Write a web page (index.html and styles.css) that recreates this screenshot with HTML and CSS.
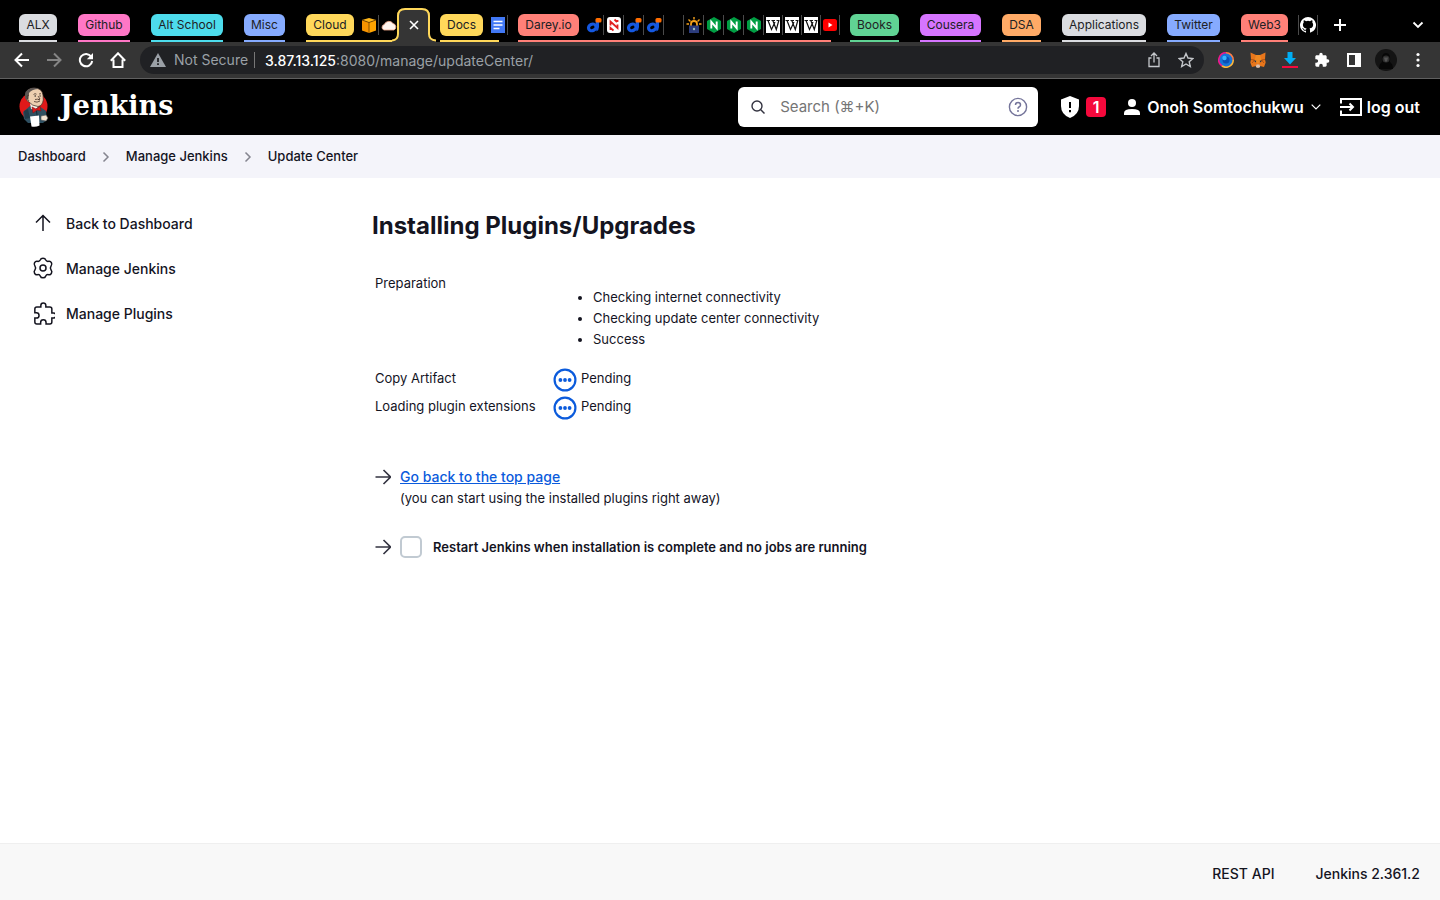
FILE: index.html
```html
<!DOCTYPE html>
<html lang="en">
<head>
<meta charset="utf-8">
<title>Update Center [Jenkins]</title>
<link rel="stylesheet" href="styles.css">
</head>
<body>
<svg class="defs" aria-hidden="true">
  <symbol id="i-darey" viewBox="0 0 16 16"><path d="M9.500 3.500h3.500V10q0 3-2.500 4.500z" fill="#1558e0"/><ellipse cx="6.300" cy="10.400" rx="3.900" ry="3.200" fill="#000" stroke="#1558e0" stroke-width="3.200" transform="rotate(-25 6.300 10.400)"/><rect x="9.500" y="1" width="6" height="4.500" rx="1.500" fill="#ff6d00"/></symbol>
  <symbol id="i-nginx" viewBox="0 0 16 16"><path d="M8 0l7 4v8l-7 4-7-4V4z" fill="#009e43"/><path d="M5.300 11.500V4.800l5.400 6.400V4.500" fill="none" stroke="#fff" stroke-width="1.900"/></symbol>
  <symbol id="i-wiki" viewBox="0 0 14 16"><path d="M0 0h14v16H0z" fill="#fff"/><path d="M.5 3.500h3.500M5.500 3.500h3.500M10.500 3.500h3M2 3.500l3.500 9L9 5M6.800 3.500l3.500 9 2.500-9" fill="none" stroke="#111" stroke-width="1.200"/></symbol>
  <symbol id="i-arrow" viewBox="0 0 16 16"><path d="M.5 8h15M8.500 1l7 7-7 7" fill="none" stroke="currentColor" stroke-width="1.600"/></symbol>
  <symbol id="i-pending" viewBox="0 0 24 24"><circle cx="12" cy="12" r="10.400" fill="#fff" stroke="#0b5bdc" stroke-width="2.200"/><g fill="#0b5bdc"><circle cx="7.400" cy="12" r="1.900"/><circle cx="12" cy="12" r="1.900"/><circle cx="16.600" cy="12" r="1.900"/></g></symbol>
  <symbol id="i-crumb" viewBox="0 0 8 12"><path d="M1.500 1.500L6 6l-4.500 4.500" fill="none" stroke="#85858f" stroke-width="1.500"/></symbol>
  <symbol id="i-puzzle" viewBox="0 0 24 24"><path d="M20.500 11H19V7c0-1.100-.9-2-2-2h-4V3.500a2.500 2.500 0 0 0-5 0V5H4c-1.100 0-2 .9-2 2v3.800h1.500a2.700 2.700 0 0 1 0 5.400H2V20c0 1.100.9 2 2 2h3.800v-1.500a2.700 2.700 0 0 1 5.400 0V22H17c1.100 0 2-.9 2-2v-4h1.500a2.500 2.500 0 0 0 0-5z"/></symbol>
</svg>

<div class="tabs">
  <div class="group grey w-alx"><button class="chip">ALX</button></div>
  <div class="group pink w-github"><button class="chip">Github</button></div>
  <div class="group cyan w-alt"><button class="chip">Alt School</button></div>
  <div class="group blue w-misc"><button class="chip">Misc</button></div>
  <div class="group yellow w-cloud">
    <button class="chip">Cloud</button>
    <svg class="fav" viewBox="0 0 16 16"><path d="M1 3l7-2 7 2-7 2.500z" fill="#ffb71b"/><path d="M1 3l7 2.500V16l-7-2.500z" fill="#f79400"/><path d="M15 3L8 5.500V16l7-2.500z" fill="#ffa400"/><path d="M1 3l7 2.500L15 3M8 5.500V16" fill="none" stroke="#6b3e00" stroke-width=".8"/></svg>
    <i class="sep"></i>
    <svg class="fav" viewBox="0 0 16 16"><path d="M3 13a2.800 2.800 0 0 1 .2-5.400A5 5 0 0 1 12 6.500 3.500 3.500 0 0 1 13 13z" fill="#fff4ee" stroke="#f2a98a" stroke-width=".8"/></svg>
  </div>
  <div class="active">
    <svg class="active-shape" viewBox="0 0 44 36"><path d="M0 36v-2q6 0 6-6V10Q6 3 13 3h18q7 0 7 7v18q0 6 6 6v2z" fill="#353535"/><path d="M0 34.500q6-.5 6-6.500V10Q6 3 13 3h17q7 0 7 7v18q0 6 7 6.500" fill="none" stroke="#ffd85a" stroke-width="2"/></svg>
    <button class="close" aria-label="Close tab"><svg viewBox="0 0 10 10"><path d="M1 1l8 8M9 1L1 9" stroke="#fff" stroke-width="1.600"/></svg></button>
  </div>
  <div class="group yellow w-docs short">
    <button class="chip">Docs</button>
    <svg class="fav" viewBox="0 0 16 16"><path d="M1 0h14v16H1z" fill="#4178f5"/><path d="M3.500 4.500h9M3.500 8h9M3.500 11.500h6" stroke="#fff" stroke-width="1.600"/></svg>
    <i class="sep"></i>
  </div>
  <div class="group red w-darey short">
    <button class="chip">Darey.io</button>
    <svg class="fav"><use href="#i-darey"/></svg><i class="sep"></i>
    <svg class="fav" viewBox="0 0 16 16"><rect x="1" width="14" height="16" rx="3" fill="#fff"/><path d="M4.500 8.500V4.500L11.500 11V7.500M11.500 5V3M4.500 13V11l3 2.500M8.500 2.500L11 5" fill="none" stroke="#e02020" stroke-width="1.800"/></svg><i class="sep"></i>
    <svg class="fav"><use href="#i-darey"/></svg><i class="sep"></i>
    <svg class="fav"><use href="#i-darey"/></svg><i class="sep"></i>
    <i class="sep gap"></i>
    <svg class="fav" viewBox="0 0 16 16"><path d="M5 9V7a3 3 0 0 1 6 0v2" fill="none" stroke="#f5a11a" stroke-width="1.800"/><path d="M8 0v2.500M2.500 2.500l2 2M13.500 2.500l-2 2M.5 7H3M15.500 7H13" stroke="#f5a11a" stroke-width="1.400"/><path d="M3 8.500h10V16H3z" fill="#2c3c7c"/><circle cx="8" cy="12" r="1.200" fill="#9bb"/></svg><i class="sep"></i>
    <svg class="fav"><use href="#i-nginx"/></svg><i class="sep"></i>
    <svg class="fav"><use href="#i-nginx"/></svg><i class="sep"></i>
    <svg class="fav"><use href="#i-nginx"/></svg><i class="sep"></i>
    <svg class="fav narrow"><use href="#i-wiki"/></svg><i class="sep"></i>
    <svg class="fav narrow"><use href="#i-wiki"/></svg><i class="sep"></i>
    <svg class="fav narrow"><use href="#i-wiki"/></svg><i class="sep"></i>
    <svg class="fav narrow" viewBox="0 0 14 16"><rect y="2" width="14" height="12" rx="2.500" fill="#f00"/><path d="M5.500 5.500v5L9.500 8z" fill="#fff"/></svg><i class="sep"></i>
  </div>
  <div class="group green w-books"><button class="chip">Books</button></div>
  <div class="group purple w-cousera"><button class="chip">Cousera</button></div>
  <div class="group orange w-dsa"><button class="chip">DSA</button></div>
  <div class="group grey w-apps"><button class="chip">Applications</button></div>
  <div class="group blue w-twitter"><button class="chip">Twitter</button></div>
  <div class="group red w-web3"><button class="chip">Web3</button></div>
  <div class="pinned">
    <i class="sep"></i>
    <svg class="fav" viewBox="0 0 16 16"><path fill="#fff" d="M8 0a8 8 0 0 0-2.530 15.590c.4.070.550-.170.550-.380v-1.490c-2.230.480-2.700-.950-2.700-.950-.360-.920-.890-1.170-.890-1.170-.730-.500.060-.490.060-.490.800.060 1.230.830 1.230.830.710 1.220 1.870.870 2.330.660.070-.520.280-.870.510-1.070-1.780-.200-3.640-.890-3.640-3.950 0-.870.310-1.590.820-2.150-.080-.200-.360-1.020.080-2.120 0 0 .670-.210 2.200.820a7.600 7.600 0 0 1 4 0c1.530-1.040 2.200-.820 2.200-.820.440 1.100.160 1.920.080 2.120.510.560.820 1.270.820 2.150 0 3.070-1.870 3.750-3.650 3.950.290.250.540.730.540 1.480v2.200c0 .210.150.460.550.380A8 8 0 0 0 8 0z"/></svg>
    <i class="sep"></i>
  </div>
  <button class="newtab" aria-label="New tab"><svg viewBox="0 0 12 12"><path d="M6 0v12M0 6h12" stroke="#fff" stroke-width="2"/></svg></button>
  <button class="tabsearch" aria-label="Search tabs"><svg viewBox="0 0 12 8"><path d="M1.500 1.500L6 6l4.500-4.500" fill="none" stroke="#fff" stroke-width="1.800"/></svg></button>
</div>

<div class="toolbar">
  <button aria-label="Back"><svg viewBox="0 0 16 16"><path d="M15 8H2M8 1.500L1.500 8 8 14.500" fill="none" stroke="#fff" stroke-width="2"/></svg></button>
  <button aria-label="Forward"><svg viewBox="0 0 16 16"><path d="M1 8h13M8 1.500L14.500 8 8 14.500" fill="none" stroke="#858585" stroke-width="2"/></svg></button>
  <button aria-label="Reload"><svg viewBox="0 0 16 16"><path d="M13.200 4.600A6.200 6.200 0 1 0 14.200 9" fill="none" stroke="#fff" stroke-width="2"/><path d="M15 1v6.200H8.800z" fill="#fff"/></svg></button>
  <button aria-label="Home"><svg viewBox="0 0 16 16"><path d="M3.500 7.500V15h9V7.500M.8 8.800L8 1.300l7.200 7.500" fill="none" stroke="#fff" stroke-width="2"/></svg></button>
  <div class="omnibox">
    <svg class="warn" viewBox="0 0 16 14"><path d="M8 0l8 14H0z" fill="#9aa0a6"/><path d="M8 5v4M8 10.200v1.800" stroke="#202124" stroke-width="1.800"/></svg>
    <span class="insecure">Not Secure</span>
    <span class="url"><b>3.87.13.125</b>:8080/manage/updateCenter/</span>
    <button aria-label="Share"><svg viewBox="0 0 16 16"><path d="M5.500 6H3v8.500h10V6h-2.500M8 10.500V1.500M5 4l3-3 3 3" fill="none" stroke="#c4c7cb" stroke-width="1.300"/></svg></button>
    <button aria-label="Bookmark"><svg viewBox="0 0 16 16"><path d="M8 1.500l2 4.500 4.900.5-3.700 3.200 1.100 4.800L8 12l-4.300 2.500 1.100-4.800L1.100 6.500 6 6z" fill="none" stroke="#c4c7cb" stroke-width="1.400"/></svg></button>
  </div>
  <div class="extensions">
    <svg viewBox="0 0 16 16"><circle cx="8" cy="8" r="7" fill="#1675d8"/><circle cx="8" cy="8" r="3.500" fill="#0b4fb4"/><circle cx="6.500" cy="6" r="2.200" fill="#37b3ff"/><path d="M8 .8A7.200 7.200 0 0 0 4 14" fill="none" stroke="#f0188c" stroke-width="1.600"/><path d="M8 .8A7.200 7.200 0 0 1 15.200 8" fill="none" stroke="#ff7d45" stroke-width="1.600"/><path d="M15.200 8A7.200 7.200 0 0 1 4 14" fill="none" stroke="#ffb73a" stroke-width="1.600"/></svg>
    <svg viewBox="0 0 16 16"><path d="M.5.500L6 3h4l5.500-2.500-.5 7 .7 3-1.700 4.500-4-1-1 1.500H7L6 14l-4 1L.3 10.500 1 7.500z" fill="#e8761b"/><path d="M6 3L4.500 8 8 12l3.500-4L10 3z" fill="#f08a22"/><path d="M3.500 8.200l2.800.6-.6 1.600zM12.500 8.200l-2.800.6.6 1.600z" fill="#233447"/><path d="M6.500 12.500h3l.7 2.200-1 1H6.800l-1-1z" fill="#d7c1b3"/><path d="M1 7.500l3.500.5L2 11M15 7.500l-3.500.5 2.500 3" fill="none" stroke="#a14a0e" stroke-width=".8"/></svg>
    <svg viewBox="0 0 16 16"><path d="M5.500 0h5v6H14l-6 6.500L2 6h3.500z" fill="#00aef5"/><path d="M0 14h16v2H0z" fill="#f5093c"/></svg>
    <svg viewBox="0 0 24 24" fill="#fff"><use href="#i-puzzle"/></svg>
    <svg viewBox="0 0 16 16"><path d="M2 2h12v12H2z" fill="none" stroke="#fff" stroke-width="2"/><path d="M9 2h5v12H9z" fill="#fff"/></svg>
    <svg class="avatar" viewBox="0 0 22 22"><circle cx="11" cy="11" r="11" fill="#141414"/><path d="M4 20q0-5 3-7-1-9 4-9t4 9q3 2 3 7z" fill="#070707"/><circle cx="11" cy="10" r="3.500" fill="#303030"/><path d="M9 8.500h4l-1 4h-2z" fill="#555"/></svg>
    <svg class="dots" viewBox="0 0 4 16" fill="#fff"><circle cx="2" cy="2.500" r="1.600"/><circle cx="2" cy="8" r="1.600"/><circle cx="2" cy="13.500" r="1.600"/></svg>
  </div>
</div>

<header class="header">
  <a class="brand" href="#">
    <svg viewBox="0 0 30 40"><circle cx="14.500" cy="19.500" r="14" fill="#e01919"/><path d="M4 25l7-6h9l7 5 1 9-4 3H9l-4-4z" fill="#2f5061"/><path d="M5 24l4-2 2 9-5 1z" fill="#203b49"/><path d="M11 16l1 6 4 1 4-4v-4z" fill="#f5efe5"/><path d="M6.500 8Q8 1 15 1q8 0 9 7l.3 5q-1 6-5.300 6.500Q13 19 10 15q-3-1-3.500-7z" fill="#edcfb0" stroke="#37261f" stroke-width=".7"/><path d="M6 11q-1-8 6-10 5-1 8 1-7 0-10 4l-.5 6-2 .8z" fill="#5c5551"/><path d="M10 8l-2 1 .5 3L10 14M14.500 7.500q1.500-1.500 3-.3M20 7l2-.3M19 9l2 3-2 .8M15 14.500q3 1.500 6-.5M16 12.500q3-1 5 .5" fill="none" stroke="#49352b" stroke-width=".8"/><path d="M15.500 9h1.500M20.500 9h1.200" stroke="#111" stroke-width="1.200"/><path d="M13 20l4 2 4-3 1 5-4-1-4 3z" fill="#e01919" stroke="#7a1014" stroke-width=".6"/><path d="M17.500 24l1 8" stroke="#122b38"/><path d="M11 29.500l9-1 .5 10q-4 2-8 1z" fill="#fff"/><path d="M22 29l5-1 2 3-2 3-5-1z" fill="#f3e4d2" stroke="#555" stroke-width=".6"/></svg>
    <span>Jenkins</span>
  </a>
  <label class="search">
    <svg class="glass" viewBox="0 0 14 14"><circle cx="6" cy="6" r="5" fill="none" stroke="#333340" stroke-width="1.400"/><path d="M9.800 9.800l3.700 3.700" stroke="#333340" stroke-width="1.500"/></svg>
    <input type="text" placeholder="Search (⌘+K)" aria-label="Search">
    <svg class="help" viewBox="0 0 20 20"><circle cx="10" cy="10" r="8.600" fill="none" stroke="#74749a" stroke-width="1.400"/><path d="M7.500 8q0-2.500 2.500-2.500T12.500 8q0 1.200-1.500 2-1 .6-1 1.700" fill="none" stroke="#74749a" stroke-width="1.500"/><circle cx="10" cy="14" r="1" fill="#74749a"/></svg>
  </label>
  <a class="alert" href="#" aria-label="Security warnings">
    <svg viewBox="0 0 18 22"><path d="M9 0l9 3.500V10q0 8.500-9 12Q0 18.500 0 10V3.500z" fill="#fff"/><path d="M9 6v6M9 14v2.200" stroke="#000" stroke-width="2"/></svg>
    <span class="badge">1</span>
  </a>
  <a class="user" href="#">
    <svg class="person" viewBox="0 0 16 16" fill="#fff"><circle cx="8" cy="4" r="4"/><path d="M0 16v-2q0-4 8-4t8 4v2z"/></svg>
    <span>Onoh Somtochukwu</span>
    <svg class="chev" viewBox="0 0 10 6"><path d="M.7.700L5 5 9.300.700" fill="none" stroke="#fff" stroke-width="1.200"/></svg>
  </a>
  <a class="logout" href="#">
    <svg viewBox="0 0 22 18"><path d="M1 5.500V1h20v16H1v-4.500M0 9h13M9.500 5.500L13 9l-3.500 3.500" fill="none" stroke="#fff" stroke-width="2"/></svg>
    <span>log out</span>
  </a>
</header>

<nav class="crumbs">
  <a href="#">Dashboard</a><svg><use href="#i-crumb"/></svg>
  <a href="#">Manage Jenkins</a><svg><use href="#i-crumb"/></svg>
  <a href="#">Update Center</a>
</nav>

<div class="page">
  <nav class="side">
    <a href="#"><svg viewBox="0 0 24 24"><path d="M12 20V5M5 11.500L12 4.500l7 7"/></svg>Back to Dashboard</a>
    <a href="#"><svg viewBox="0 0 24 24"><circle cx="12" cy="12" r="3"/><path d="M9.400 3.800Q9.800 2.200 12 2.200t2.600 1.600q.9 2 3.100 1.500 1.700-.4 2.700 1.400t-.3 3.200q-1.500 2.100 0 4.200 1.300 1.400.3 3.200t-2.700 1.400q-2.200-.5-3.100 1.500-.4 1.600-2.600 1.600t-2.600-1.600q-.9-2-3.100-1.500-1.700.4-2.700-1.400t.3-3.200q1.500-2.100 0-4.200-1.300-1.400-.3-3.200t2.700-1.400q2.200.5 3.100-1.500z"/></svg>Manage Jenkins</a>
    <a href="#"><svg viewBox="-2 -1 26 26"><use href="#i-puzzle"/></svg>Manage Plugins</a>
  </nav>
  <main class="main">
    <h1>Installing Plugins/Upgrades</h1>
    <table class="jobs">
      <tr><td>Preparation</td><td><ul><li>Checking internet connectivity</li><li>Checking update center connectivity</li><li>Success</li></ul></td></tr>
      <tr><td>Copy Artifact</td><td><div class="status"><svg><use href="#i-pending"/></svg>Pending</div></td></tr>
      <tr><td>Loading plugin extensions</td><td><div class="status"><svg><use href="#i-pending"/></svg>Pending</div></td></tr>
    </table>
    <div class="next">
      <svg><use href="#i-arrow"/></svg>
      <div><a href="#">Go back to the top page</a><br>(you can start using the installed plugins right away)</div>
    </div>
    <div class="next restart">
      <svg><use href="#i-arrow"/></svg>
      <input type="checkbox" id="restart"><label for="restart">Restart Jenkins when installation is complete and no jobs are running</label>
    </div>
  </main>
</div>

<footer class="footer"><a href="#">REST API</a><a href="#">Jenkins 2.361.2</a></footer>
</body>
</html>
```
FILE: styles.css
```css
* { box-sizing: border-box; }
body {
  margin: 0;
  min-height: 100vh;
  display: flex;
  flex-direction: column;
  font: 14px/21px Inter, "Liberation Sans", sans-serif;
  color: #14141f;
  background: #fff;
}
a { color: inherit; text-decoration: none; }
button { border: 0; padding: 0; margin: 0; background: none; font: inherit; color: inherit; }
svg { display: block; flex: none; }
.defs { position: absolute; width: 0; height: 0; }

/* tab strip */
.tabs { display: flex; height: 42px; padding-left: 19px; background: #000; }
.group { --c: #dadce0; position: relative; display: flex; align-items: center; height: 42px; padding: 8px 0 0; margin-right: 21px; flex: none; }
.group::after { content: ""; position: absolute; left: 0; right: 0; bottom: 0; height: 2px; background: var(--c); }
.group.short::after { right: 9px; }
.chip { flex: 1 0 auto; height: 22px; padding: 0 6px; border-radius: 6px; background: var(--c); color: #202124; font-size: 12px; line-height: 22px; text-align: center; }
.pink { --c: #ff77c6; }
.cyan { --c: #4ddcec; }
.blue { --c: #86abff; }
.yellow { --c: #ffd85a; }
.red { --c: #ff8078; }
.green { --c: #60d394; }
.purple { --c: #d675ff; }
.orange { --c: #ffaa66; }
.w-alx { width: 38px; }
.w-github { width: 52px; }
.w-alt { width: 72px; }
.w-misc { width: 41px; }
.w-cloud { width: 91px; margin-right: 1px; }
.w-docs { width: 68px; margin-right: 10px; }
.w-darey { width: 322px; margin-right: 10px; }
.w-books { width: 49px; }
.w-cousera { width: 61px; }
.w-dsa { width: 39px; }
.w-apps { width: 84px; }
.w-twitter { width: 53px; }
.w-web3 { width: 47px; margin-right: 10px; }
.fav { width: 16px; height: 16px; margin-left: 2px; }
.fav.narrow { width: 14px; margin-right: 1px; }
.chip + .fav { margin-left: 7px; }
.sep { width: 1px; height: 20px; margin-left: 1px; background: #4a4a4a; flex: none; }
.sep.gap { margin-left: 19px; }
.active { position: relative; display: flex; width: 42px; align-items: center; justify-content: center; padding-top: 8px; z-index: 1; }
.active-shape { position: absolute; left: -6px; bottom: 0; width: 44px; height: 36px; }
.close { position: relative; margin-right: 10px; }
.close svg { width: 10px; height: 10px; }
.pinned { display: flex; align-items: center; padding-top: 8px; }
.pinned .sep:first-child { margin-left: 0; }
.pinned .fav { margin-left: 1px; }
.newtab { margin-left: 16px; padding-top: 8px; }
.newtab svg { width: 12px; height: 12px; }
.tabsearch { margin: 0 16px 0 auto; padding-top: 8px; }
.tabsearch svg { width: 12px; height: 8px; }

/* address bar */
.toolbar { display: flex; align-items: center; height: 37px; padding: 0 16px 0 14px; background: #353535; border-bottom: 1px solid #606060; }
.toolbar button { margin-right: 16px; }
.toolbar svg { width: 16px; height: 16px; }
.omnibox { flex: 1; display: flex; align-items: center; height: 28px; margin-right: 14px; margin-left: -2px; padding: 0 10px; border-radius: 14px; background: #202124; color: #9aa0a6; }
.omnibox .warn { height: 14px; margin-right: 8px; }
.omnibox button:last-child { margin-right: 0; }
.insecure { padding-right: 6px; border-right: 1px solid #777; line-height: 16px; }
.url { flex: 1; margin-left: 10px; }
.url b { color: #fff; font-weight: 500; }
.extensions { display: flex; align-items: center; gap: 16px; }
.toolbar .avatar { width: 22px; height: 22px; margin: 0 -3px; }
.toolbar .dots { width: 4px; margin: 0 4px 0 6px; }

/* application header */
.header { display: flex; align-items: center; height: 56px; padding: 0 20px 0 19px; background: #000; color: #fff; font-size: 16px; font-weight: 600; }
.brand { display: flex; align-items: center; gap: 11px; margin-right: auto; font: bold 27px/40px "DejaVu Serif", serif; }
.brand svg { width: 30px; height: 40px; }
.brand span { padding-bottom: 2px; }
.search { display: flex; align-items: center; width: 300px; height: 40px; padding: 0 10px 0 13px; border-radius: 6px; background: #fff; }
.search input { flex: 1; min-width: 0; border: 0; outline: 0; margin: 0 15px; padding: 0; font: 15px/24px Inter, sans-serif; background: none; }
.search input::placeholder { color: #757575; }
.glass { width: 14px; height: 14px; }
.help { width: 20px; height: 20px; }
.alert { display: flex; align-items: center; gap: 7px; margin-left: 23px; }
.alert svg { width: 18px; height: 22px; }
.badge { width: 20px; height: 20px; border-radius: 4px; background: #f5093c; line-height: 20px; text-align: center; }
.user { display: flex; align-items: center; gap: 7px; margin-left: 18px; }
.person { width: 16px; height: 16px; }
.chev { width: 10px; height: 6px; }
.logout { display: flex; align-items: center; gap: 5px; margin-left: 19px; }
.logout svg { width: 22px; height: 18px; }

.crumbs { display: flex; align-items: center; gap: 16px; height: 43px; padding: 0 18px; background: #f4f4fa; font-size: 13px; font-weight: 500; }
.crumbs svg { width: 8px; height: 12px; }

/* page */
.page { flex: 1; display: flex; }
.side { display: flex; flex-direction: column; gap: 21px; width: 372px; padding: 33px 31px; font-weight: 500; }
.side a { display: flex; align-items: center; gap: 11px; height: 24px; }
.side svg { width: 24px; height: 24px; fill: none; stroke: #14141f; stroke-width: 1.5; }
.main { flex: 1; padding: 32px 20px 0 0; font-size: 13px; }
h1 { margin: 0 0 28px; font-size: 24px; line-height: 32px; font-weight: 700; }
.jobs { border-spacing: 2px; }
.jobs td { padding: 1px; vertical-align: top; font-size: 13px; }
.jobs td:first-child { width: 176px; }
.jobs ul { margin: 14px 0; padding-left: 40px; }
.status { display: flex; gap: 4px; }
.status svg { width: 24px; height: 24px; }
.next { display: flex; gap: 9px; margin: 43px 0 0 3px; }
.next svg { width: 16px; height: 16px; margin-top: 3px; color: #333340; }
.next a { color: #0b5bdc; font-size: 14px; font-weight: 500; text-decoration: underline; }
.restart { align-items: center; margin-top: 27px; font-weight: 600; }
.restart svg { margin-top: 0; }
.restart input { appearance: none; width: 22px; height: 22px; margin: 0; border: 2px solid #c1cad2; border-radius: 5px; background: #fff; }
.restart label { margin-left: 2px; }

.footer { display: flex; justify-content: flex-end; align-items: center; gap: 41px; height: 57px; padding: 2px 20px 0; border-top: 1px solid #efefef; background: #f8f8f8; font-weight: 500; }
```
